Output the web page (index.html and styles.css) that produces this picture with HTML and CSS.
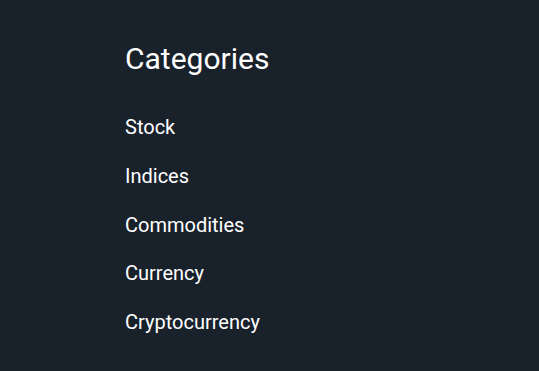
FILE: index.html
```html
<!DOCTYPE html>
<html>
<head>
<meta charset="utf-8">
<link rel="stylesheet" href="styles.css">
</head>
<body>
<section class="categories">
  <h2 class="title">Categories</h2>
  <ul class="list">
    <li><a href="#">Stock</a></li>
    <li><a href="#">Indices</a></li>
    <li><a href="#">Commodities</a></li>
    <li><a href="#">Currency</a></li>
    <li><a href="#">Cryptocurrency</a></li>
  </ul>
</section>
</body>
</html>
```
FILE: styles.css
```css
html, body {
  margin: 0;
  padding: 0;
  background: #19212b;
  height: 100%;
}
body {
  font-family: Roboto, "Liberation Sans", sans-serif;
  color: #ffffff;
}
.categories {
  padding: 40px 0 0 125px;
}
.title {
  margin: 0;
  font-size: 30px;
  font-weight: 400;
  line-height: 38px;
}
.list {
  list-style: none;
  margin: 37px 0 0;
  padding: 0;
  display: flex;
  flex-direction: column;
  gap: 24.75px;
}
.list a {
  color: #ffffff;
  text-decoration: none;
  font-size: 20px;
  line-height: 24px;
  display: block;
}
```
